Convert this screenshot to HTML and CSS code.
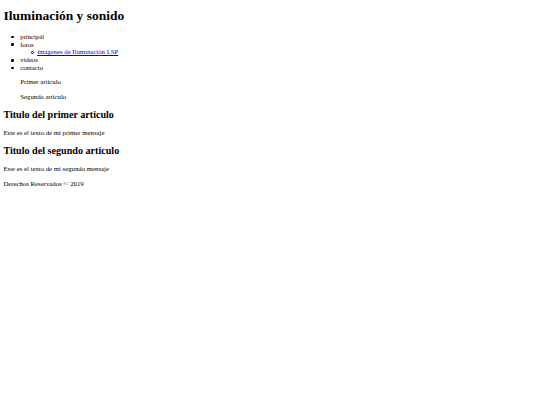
FILE: index.html
```html
<!DOCTYPE html>
<html lang="es">
<head>
<meta charset="utf-8">
<title>Iluminación y sonido</title>
<link rel="stylesheet" href="styles.css">
</head>
<body class="page">
<header>
<h1 class="title">Iluminación y sonido</h1>
</header>
<nav>
<ul class="menu">
<li class="item">principal</li>
<li class="item">fotos
<ul class="submenu">
<li class="subitem"><a class="link" href="#">imagenes de Iluminación LSP</a></li>
</ul>
</li>
<li class="item">videos</li>
<li class="item">contacto</li>
</ul>
</nav>
<aside class="aside">
<p class="text">Primer articulo</p>
<p class="text">Segundo articulo</p>
</aside>
<section>
<article>
<h2 class="subtitle">Titulo del primer articulo</h2>
<p class="text">Este es el texto de mi primer mensaje</p>
</article>
<article>
<h2 class="subtitle">Titulo del segundo articulo</h2>
<p class="text">Este es el texto de mi segundo mensaje</p>
</article>
</section>
<footer>
<p class="text">Derechos Reservados © 2019</p>
</footer>
</body>
</html>
```
FILE: styles.css
```css
.page {
  margin: 3.375px;
  font-family: "Liberation Serif", "Times New Roman", serif;
  font-size: 6.75px;
  line-height: 1.15;
  color: #000;
  background: #fff;
}
.title {
  font-size: 13.5px;
  line-height: 1.15;
  margin: 5px 0 9.045px;
  font-weight: bold;
}
.subtitle {
  font-size: 10.125px;
  line-height: 1.15;
  margin: 8.404px 0;
  font-weight: bold;
}
.text {
  margin: 6.75px 0;
}
.menu {
  margin: 6.75px 0;
  padding-left: 16.875px;
  list-style: none;
}
.submenu {
  margin: 0;
  padding-left: 16.875px;
  list-style: none;
}
.item::before {
  content: "";
  display: inline-block;
  width: 2.6px;
  height: 2.6px;
  border-radius: 50%;
  background: #000;
  margin-left: -9.2px;
  margin-right: 6.6px;
  vertical-align: 0.6px;
}
.subitem::before {
  content: "";
  display: inline-block;
  box-sizing: border-box;
  width: 3px;
  height: 3px;
  border-radius: 50%;
  border: 0.6px solid #000;
  margin-left: -6.2px;
  margin-right: 3.2px;
  vertical-align: 0.5px;
}
.link {
  color: #0000ee;
}
.aside {
  padding-left: 16.875px;
}
```
